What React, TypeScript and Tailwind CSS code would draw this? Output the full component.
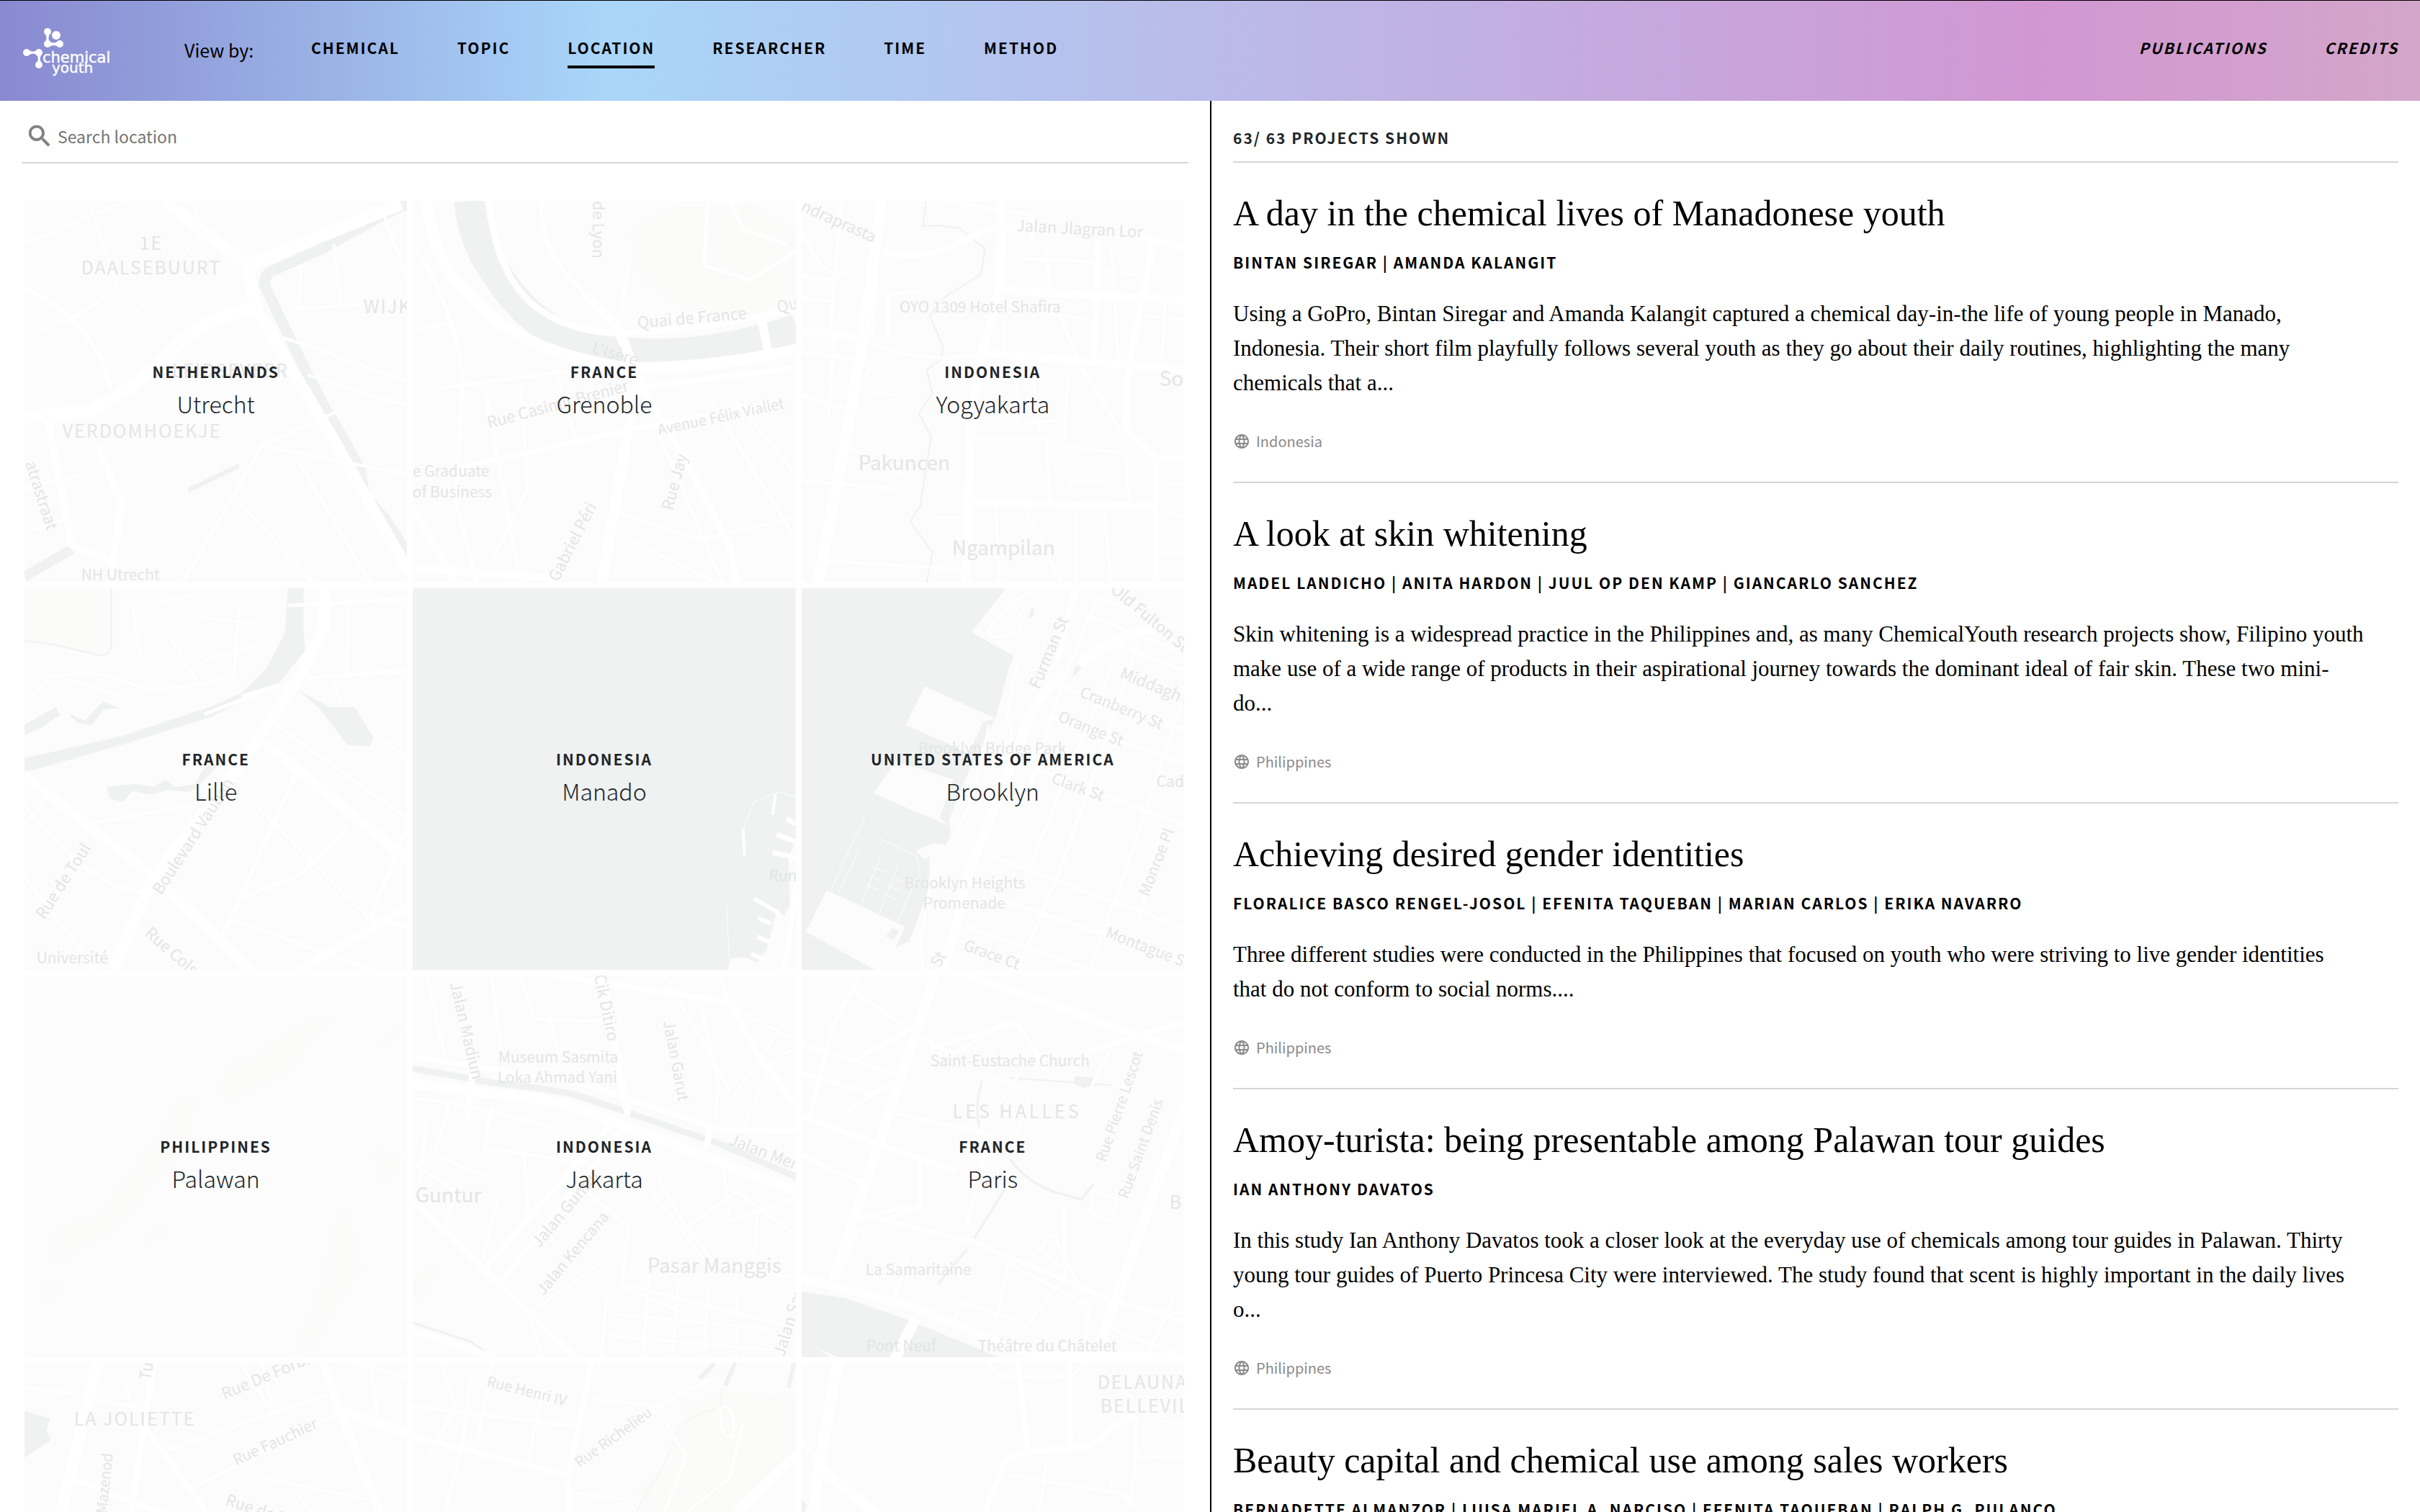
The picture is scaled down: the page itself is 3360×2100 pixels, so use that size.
import { useState } from "react";

type Label = { t: string; x: number; y: number; r?: number; size?: number; ls?: number };
type Place = {
  country: string;
  city: string;
  base?: string;
  hills?: string[];
  land?: string[];
  water?: string[];
  streams?: [string, number][];
  roads: [string, number][];
  labels: Label[];
};
type Project = { title: string; people: string[]; lines: string; country: string };

const NAV = ["Chemical", "Topic", "Location", "Researcher", "Time", "Method"];

// Map drawings use a 532 x 530 canvas, the same as one tile
const PLACES: Place[] = [
  {
    country: "Netherlands",
    city: "Utrecht",
    streams: [
      ["M532 4 L494 22 L416 65 L345 97 Q332 103 334 118 L366 185 L394 242 L419 290 L437 320 L466 372 L473 410 L501 442 L534 492", 15],
      ["M0 522 L66 484", 14],
      ["M228 402 L298 368", 6],
      ["M151 260 L196 218", 12],
    ],
    roads: [
      ["M194 0 L309 88 L323 152 L423 320 L494 445 L534 515", 16],
      ["M305 92 L523 4", 18],
      ["M316 149 Q240 165 201 214 L151 256 L94 292 L0 300", 18],
      ["M30 290 L66 478 L119 500", 10],
      ["M101 338 L135 420 L119 530", 10],
      ["M0 120 Q100 170 120 260", 6],
      ["M360 190 L532 250 M394 242 L532 285 M330 340 L440 290 M220 530 L330 340 L532 380", 4],
      ["M385 90 L380 150 L532 140 M430 60 L440 150 M500 20 L532 110", 4],
      ["M90 0 L130 120 L60 170 M0 60 L140 0 M150 160 L250 40 L230 0 M0 190 L90 150", 3],
      ["M380 360 L480 530 M300 420 L400 530 M0 400 L80 380 M0 460 L66 440", 4],
    ],
    labels: [
      { t: "1E", x: 160, y: 68, size: 25, ls: 2 },
      { t: "DAALSEBUURT", x: 79, y: 102, size: 25, ls: 2 },
      { t: "WIJK", x: 471, y: 156, size: 25, ls: 2 },
      { t: "LEIDSEVEER", x: 205, y: 245, size: 25, ls: 2 },
      { t: "VERDOMHOEKJE", x: 53, y: 329, size: 25, ls: 2 },
      { t: "atrastraat", x: 1, y: 364, r: 72 },
      { t: "NH Utrecht", x: 79, y: 527, size: 21 },
    ],
  },
  {
    country: "France",
    city: "Grenoble",
    hills: ["M300 45 L350 10 L470 5 L532 40 L532 130 L470 160 L380 150 L320 110 Z"],
    streams: [["M79 0 Q84 60 120 106 Q180 200 290 210 Q400 222 534 178", 42]],
    roads: [
      ["M20 0 Q30 90 77 128 Q150 215 306 232 Q420 232 534 206", 16],
      ["M108 0 Q110 70 145 120 Q190 180 284 184 Q400 180 532 150", 9],
      ["M240 130 L284 174 L315 250 L299 320 L263 530", 14],
      ["M315 250 L377 356 L441 481 L450 530", 9],
      ["M484 160 L496 222", 12],
      ["M70 370 L290 320 L500 280 M306 260 L532 232", 7],
      ["M0 510 L199 524 M0 425 L60 530", 10],
      ["M0 60 Q60 150 70 250 L60 420 L90 530 M0 180 L50 170 M40 260 L260 230 M100 260 L150 530", 5],
      ["M150 250 L160 400 L110 500 M200 240 L230 340 M280 430 L400 470 L532 440 M410 270 L532 470 M450 280 L532 380 M300 470 L420 530 M340 320 L430 530", 4],
      ["M410 0 L405 90 L470 110 L532 70 M440 0 L460 40 L520 60 M180 0 Q170 60 240 130 M300 90 L290 150", 5],
    ],
    labels: [
      { t: "de Lyon", x: 250, y: 0, r: 90 },
      { t: "Quai de France", x: 313, y: 177, r: -5 },
      { t: "Qu", x: 508, y: 156, r: -14 },
      { t: "L'Isère", x: 248, y: 211, r: 16 },
      { t: "Rue Casimir Brenier", x: 106, y: 316, r: -15 },
      { t: "Avenue Félix Viallet", x: 342, y: 325, r: -12, size: 20 },
      { t: "e Graduate", x: 0, y: 383, size: 21 },
      { t: "of Business", x: 0, y: 412, size: 21 },
      { t: "Rue Jay", x: 361, y: 431, r: -75 },
      { t: "Gabriel Péri", x: 202, y: 530, r: -63 },
    ],
  },
  {
    country: "Indonesia",
    city: "Yogyakarta",
    streams: [
      ["M173 0 L169 35 L190 34 L220 38 L255 67 L249 102 L197 135 L178 160 L197 202 L194 220 L174 235 L182 267 L163 295 L180 327 L165 424 L151 445 L182 488 L174 530", 2],
    ],
    roads: [
      ["M111 0 L85 195 L60 338 L23 530", 15],
      ["M278 0 L276 117 L251 210 L236 302 L228 530", 12],
      ["M113 70 Q180 84 225 55 L263 38 L310 38", 9],
      ["M465 49 L534 65 M0 180 L85 190", 10],
      ["M278 124 L532 138 M247 210 L532 235", 11],
      ["M412 52 L406 220", 8],
      ["M488 60 L454 231 L450 317 L492 356 L492 530", 9],
      ["M232 419 L492 424 M490 358 L532 358", 9],
      ["M358 156 L385 224 L442 317", 5],
      ["M0 388 L130 400 M35 500 L228 512 M60 340 L150 385 M96 230 L85 250 M111 10 L98 190", 4],
      ["M0 105 L50 110 M0 135 L45 140 M55 0 L40 180 M0 40 Q30 110 60 100 M0 210 L74 220 M45 190 L38 300 M0 270 L70 290", 4],
      ["M90 195 Q170 230 250 212 M90 265 L130 270 M120 190 L120 130 L170 125 M200 0 L320 20 L320 60 M310 80 L410 85 M340 60 L345 130", 4],
      ["M280 160 L280 210 M300 150 L400 165 M430 60 L440 220 M415 95 L480 105 M480 160 L532 165 M505 140 L500 225", 3],
      ["M240 330 L340 330 L345 420 M270 420 L275 530 M310 425 L360 530 M360 340 L450 350 L455 420 M370 390 L420 390 M380 425 L380 530 M420 425 L430 530", 3],
      ["M500 390 L532 395 M500 430 L532 440 M500 490 L532 490 M320 230 L330 320 M370 240 L365 330 M300 215 L300 310 L360 305 M180 440 L235 440", 3],
    ],
    labels: [
      { t: "ndraprasta", x: -2, y: 13, r: 24 },
      { t: "Jalan Jlagran Lor", x: 298, y: 42, r: 3 },
      { t: "OYO 1309 Hotel Shafira", x: 136, y: 155, size: 21 },
      { t: "So", x: 497, y: 257, size: 28 },
      { t: "Pakuncen", x: 79, y: 374, size: 28 },
      { t: "Ngampilan", x: 209, y: 492, size: 28 },
    ],
  },
  {
    country: "France",
    city: "Lille",
    hills: ["M0 0 H121 V80 Q120 95 105 90 L0 72 Z"],
    water: [
      "M366 0 H388 L388 60 L390 86 L352 134 L308 153 L302 145 L336 112 L362 62 Z",
      "M302 145 L258 165 L137 205 L0 236 V254 L14 252 L140 216 L262 178 L306 154 Z",
      "M381 142 L423 165 L459 165 L485 208 L479 220 L448 217 L412 169 Z",
      "M114 276 L155 272 L180 276 L196 266 L210 276 L237 272 L251 247 L269 245 L248 269 L230 283 L200 280 L176 287 L150 282 L137 297 L119 292 Z",
      "M0 190 L44 165 L50 176 L23 194 L0 204 Z",
      "M62 174 L84 184 L109 158 L134 167 L110 168 L94 190 L73 187 Z",
    ],
    streams: [["M0 73 L40 78 L105 93 Q120 93 121 80 V0", 2]],
    roads: [
      ["M418 0 L416 54 L387 115 L351 169 L309 233 L270 285 L180 400 L123 530", 16],
      ["M334 215 L534 378", 14],
      ["M0 261 L180 400 L316 532", 13],
      ["M534 442 L380 532", 12],
      ["M531 15 L366 24 M532 115 L394 124 M302 150 L356 134 M250 175 L340 140", 5],
      ["M380 251 L300 430 L270 490 M450 330 L380 400 L300 430 M290 460 L480 530 M320 300 L480 460 L532 470 M480 460 L532 330", 5],
      ["M450 20 L448 120 M430 130 L440 165 M500 210 L532 240 L532 300 M350 190 L532 320", 4],
      ["M0 300 Q50 370 120 410 L180 430 M100 325 L240 300 M0 400 L100 530 M0 330 L30 290", 4],
      ["M60 120 Q100 110 170 142 L270 130 M10 150 L40 120 L130 150 M150 20 L160 90 L210 140 L280 125 M170 60 Q180 30 210 80 L240 130", 3],
      ["M240 40 L330 50 M230 10 L190 20 M300 20 L290 130 M250 100 L320 80", 3],
    ],
    labels: [
      { t: "Boulevard Vauban", x: 190, y: 427, r: -57 },
      { t: "Rue de Toul", x: 28, y: 461, r: -57 },
      { t: "Rue Colson", x: 166, y: 481, r: 41 },
      { t: "Université", x: 17, y: 521, size: 21 },
    ],
  },
  {
    country: "Indonesia",
    city: "Manado",
    base: "#eff2f1",
    land: [
      "M532 350 L522 375 L524 440 L516 455 L506 447 L492 500 L480 520 L460 512 L441 515 L438 530 H532 Z",
    ],
    streams: [],
    roads: [
      ["M534 400 L524 480 L516 530", 6],
      ["M504 286 L500 315 M459 335 L461 372", 4],
      ["M506 342 L532 352 M500 367 L532 374 M520 320 L532 328", 7],
      ["M474 431 L509 451 M480 458 L498 466 M478 484 L498 492 M470 508 L490 516", 6],
      ["M436 442 L440 515 M459 335 L474 297 L509 283 L532 290", 1],
    ],
    labels: [{ t: "Run", x: 495, y: 407, size: 21 }],
  },
  {
    country: "United States of America",
    city: "Brooklyn",
    base: "#eff2f1",
    land: [
      "M284 0 L236 61 L295 94 L287 115 L270 179 L224 272 L205 322 L207 344 L201 356 L182 354 L178 379 L176 420 L150 490 L117 505 L102 530 H532 V0 Z",
      "M171 136 L270 181 L253 185 L232 229 L145 190 Z",
      "M132 240 L211 266 L192 319 L205 330 L100 285 Z",
      "M35 419 L144 470 L130 500 L102 530 L6 477 Z",
      "M159 365 L182 354 L190 370 L170 376 Z",
    ],
    roads: [
      ["M507 51 Q440 65 385 104", 14],
      ["M366 119 Q318 155 305 211 L274 290 L232 394 L213 476 L194 532", 13],
      ["M381 0 L355 100", 9],
      ["M412 11 L362 133 L316 280", 4],
      ["M393 36 L532 90 M430 75 L532 115 M362 136 L532 197 M343 178 L532 244 M324 251 L532 329 M263 372 L532 472 M266 429 L532 519 M230 470 L400 530", 5],
      ["M469 72 L360 390 L300 530 M527 161 L440 420 L400 530 M430 110 L316 390 M500 330 L470 460 M284 250 L255 340", 4],
      ["M412 11 L532 60 M300 20 Q240 60 270 68 Q330 60 290 20 L330 0 M300 100 L285 180 Q300 210 280 230 M260 190 Q240 300 210 350 Q180 380 175 440 Q160 500 170 530", 3],
      ["M89 315 L41 418 M107 347 L161 373 L165 400 M80 365 L52 422 M110 372 L84 437 M134 386 L108 452 M160 402 L134 464", 1],
      ["M100 388 L116 394 M95 400 L111 406 M90 412 L106 418 M124 400 L142 408 M119 412 L137 420 M114 424 L132 432", 1],
    ],
    water: ["M126 472 L136 476 L128 488 L117 484 Z", "M318 30 L324 28 L322 38 L316 42 Z", "M380 108 L390 110 L376 124 Z"],
    labels: [
      { t: "Furman St", x: 330, y: 141, r: -67 },
      { t: "Old Fulton St", x: 428, y: 4, r: 40 },
      { t: "Middagh St", x: 441, y: 124, r: 22 },
      { t: "Cranberry St", x: 385, y: 150, r: 22, size: 21 },
      { t: "Orange St", x: 355, y: 184, r: 22, size: 21 },
      { t: "Brooklyn Bridge Park", x: 162, y: 230, size: 21 },
      { t: "Clark St", x: 346, y: 270, r: 20, size: 21 },
      { t: "Cad", x: 493, y: 276, size: 21 },
      { t: "Monroe Pl", x: 482, y: 429, r: -69, size: 21 },
      { t: "Brooklyn Heights", x: 143, y: 417, size: 21 },
      { t: "Promenade", x: 169, y: 445, size: 21 },
      { t: "Grace Ct", x: 224, y: 502, r: 20, size: 21 },
      { t: "Montague St", x: 421, y: 484, r: 21, size: 21 },
      { t: "St", x: 192, y: 528, r: -62 },
    ],
  },
  {
    country: "Philippines",
    city: "Palawan",
    hills: [
      "M430 50 L366 132 L285 178 L273 156 L280 127 L330 105 L380 70 Z",
      "M237 166 L230 230 L180 287 L130 350 L37 403 L44 355 L109 326 L144 277 L190 220 L205 180 Z",
      "M441 316 L469 403 L430 460 L394 530 H372 L410 440 Z",
      "M532 70 L490 110 L510 80 Z M480 240 L525 250 L500 290 Z M200 355 L165 380 L180 350 Z M30 430 L50 430 L30 460 Z",
    ],
    roads: [],
    labels: [],
  },
  {
    country: "Indonesia",
    city: "Jakarta",
    hills: ["M40 400 L10 450 L0 440 V420 Z"],
    streams: [
      ["M0 129 L113 149 Q200 158 234 168 L427 234 L534 280", 9],
      ["M0 482 L80 508 L110 528", 3],
    ],
    roads: [
      ["M0 113 L127 132 L249 154 L427 214 L534 216", 7],
      ["M0 150 L120 165 Q200 172 240 188 L534 300", 14],
      ["M199 0 L441 37 L480 110 L532 180", 9],
      ["M277 205 L99 408 M290 215 L120 428", 7],
      ["M0 311 L227 532 M0 493 L113 530", 9],
      ["M263 0 L299 195 M84 130 L76 200 M414 210 L408 240", 9],
      ["M441 37 L425 0 M350 0 L441 160 M400 40 L425 150 L420 200 M190 50 L200 100 L270 110 M110 0 L125 120 M150 0 L170 60 L290 65 M20 0 L45 110", 4],
      ["M0 170 L76 180 L190 210 M20 200 L10 290 M50 180 L30 250 L110 280 M110 180 L100 240 L240 260 M0 260 L60 300 L40 360 M155 240 L160 330", 4],
      ["M230 290 L300 350 L290 430 L380 470 M340 280 L380 350 L450 300 L532 360 M380 350 L420 400 L532 420 M300 430 L532 490 M270 440 L262 530 M330 400 L320 530", 4],
      ["M370 420 L360 530 M410 430 L405 530 M450 440 L450 530 M270 500 L500 520 M275 470 L490 490 M300 260 L410 400 M430 250 L440 340 L532 310 M480 320 L470 430", 3],
      ["M445 150 L532 100 M430 190 L520 60 M460 210 L500 120 M180 530 L160 470 L260 400 M120 305 L90 420 M400 20 L532 90", 3],
    ],
    labels: [
      { t: "Jalan Madiun", x: 52, y: 11, r: 77 },
      { t: "Cik Ditiro", x: 252, y: 0, r: 78 },
      { t: "Jalan Garut", x: 348, y: 64, r: 79, size: 21 },
      { t: "Museum Sasmita", x: 119, y: 121, size: 21 },
      { t: "Loka Ahmad Yani", x: 118, y: 149, size: 21 },
      { t: "Jalan Ment", x: 438, y: 234, r: 21 },
      { t: "Guntur", x: 4, y: 315, size: 28 },
      { t: "Jalan Guntur", x: 176, y: 379, r: -50 },
      { t: "Jalan Kencana", x: 182, y: 445, r: -50, size: 21 },
      { t: "Pasar Manggis", x: 326, y: 413, size: 28 },
      { t: "Jalan Sawo", x: 516, y: 530, r: -73 },
    ],
  },
  {
    country: "France",
    city: "Paris",
    water: ["M0 439 L60 448 L148 478 L274 530 H50 L18 515 L40 530 H0 Z", "M380 140 L410 142 L408 154 L392 156 L378 150 Z"],
    streams: [
      ["M251 146 Q240 180 247 210", 3],
      ["M290 255 Q310 285 350 300 L389 311 L405 290", 3],
      ["M282 297 L240 365 M230 380 L190 428", 3],
      ["M290 142 L430 152", 2],
    ],
    roads: [
      ["M186 0 L44 423", 13],
      ["M232 0 L469 83 L532 103", 11],
      ["M532 64 L469 83 L400 105", 8],
      ["M534 178 L488 306 L416 508", 14],
      ["M0 195 L106 234 L217 272", 8],
      ["M0 420 L152 459 L312 524 L532 530", 11],
      ["M159 476 L130 532", 15],
      ["M80 0 L40 80 L12 195 M70 20 L150 75 L70 120 M150 75 L210 110 L290 60 M180 100 L300 65 L340 130 M0 95 L140 140 L60 190 M0 135 L100 165", 5],
      ["M125 190 L260 220 L230 350 M165 250 L165 320 L110 342 M80 330 L240 370 L430 450 L532 480 M0 250 L90 290 M70 340 L150 320 M150 385 L125 460", 5],
      ["M290 390 L270 480 M290 400 L400 460 L390 530 M350 360 L400 460 M345 360 L315 400 M365 320 L365 420 L310 490 M330 380 L360 405 M210 480 L225 455 L300 480", 4],
      ["M440 455 L532 470 M430 490 L532 530 M520 440 L480 530 M400 160 L430 100 M405 300 L440 310 L430 340 L400 330 Z", 4],
      ["M260 140 L320 160 M300 140 L255 210 M320 160 L290 250 M60 400 L80 350 L95 380", 3],
    ],
    labels: [
      { t: "Saint-Eustache Church", x: 179, y: 126, size: 21 },
      { t: "LES HALLES", x: 210, y: 198, size: 25, ls: 4 },
      { t: "Rue Pierre Lescot", x: 422, y: 260, r: -71, size: 20 },
      { t: "Rue Saint Denis", x: 453, y: 311, r: -70, size: 20 },
      { t: "BE", x: 511, y: 324, size: 25, ls: 2 },
      { t: "La Samaritaine", x: 89, y: 416, size: 21 },
      { t: "Pont Neuf", x: 90, y: 522, size: 21 },
      { t: "Théâtre du Châtelet", x: 245, y: 522, size: 21 },
    ],
  },
  {
    country: "France",
    city: "Marseille",
    water: ["M0 67 L36 77 L31 93 L37 107 L0 132 Z"],
    roads: [
      ["M101 0 L51 208 L0 420", 16],
      ["M180 0 L144 230", 9],
      ["M416 0 L437 64 L494 208 L540 320", 12],
      ["M437 64 L534 99", 14],
      ["M166 88 L244 194 L300 300 M66 160 L180 205 L300 240", 8],
      ["M95 50 L170 65 M200 120 L420 45 M300 0 L350 75 M240 170 L437 70 M0 35 L65 42 M330 0 L345 60 M480 0 L490 70 M532 20 L460 0", 4],
      ["M280 208 L330 160 L480 190 M350 150 L400 208 M140 30 L150 60", 3],
    ],
    labels: [
      { t: "Tu", x: 175, y: 25, r: -80 },
      { t: "Rue De Forbin", x: 278, y: 51, r: -23 },
      { t: "LA JOLIETTE", x: 69, y: 87, size: 25, ls: 2 },
      { t: "Rue Fauchier", x: 294, y: 143, r: -25, size: 21 },
      { t: "Mazenod", x: 114, y: 210, r: -84, size: 20 },
      { t: "Rue de la", x: 278, y: 197, r: 18 },
    ],
  },
  {
    country: "France",
    city: "Saint-Étienne",
    hills: ["M380 60 L430 40 L532 45 V130 L449 208 H340 L310 180 L360 130 Z"],
    streams: [["M399 22 L420 0 M434 32 L448 0 M522 34 L530 0", 6], ["M430 35 L428 60 L390 75 L370 90 L350 140 L310 208", 1]],
    roads: [
      ["M0 102 L216 156 L218 208 M249 0 L216 156", 8],
      ["M534 127 L449 208", 14],
      ["M40 0 L60 60 L20 130 M80 20 L70 110 L45 208 M110 0 L90 110 M180 40 L160 140 M0 60 L240 90 M250 50 L340 60 L420 20", 4],
      ["M216 156 L360 50 M216 180 L300 190 L310 208 M350 80 L380 130 L350 208 M430 60 Q450 60 445 100 Q425 110 428 60 M460 80 L440 160 L380 208", 3],
    ],
    labels: [
      { t: "Rue Henri IV", x: 102, y: 32, r: 14, size: 20 },
      { t: "Rue Richelieu", x: 232, y: 146, r: -36, size: 20 },
    ],
  },
  {
    country: "France",
    city: "Belleville",
    water: ["M0 188 L8 198 L4 210 L0 212 Z"],
    roads: [
      ["M50 0 L25 141 L14 230 M25 145 L110 215", 15],
      ["M465 73 L431 88 Q410 114 389 117 L312 124 Q280 130 278 151 L251 215", 9],
      ["M301 0 L314 122 M372 0 L374 115", 7],
      ["M0 110 L30 140 M262 0 Q265 20 300 20 L374 18 L395 0 M289 156 L440 180 L470 200 M465 73 L465 130 L455 200 M465 130 L532 132", 4],
      ["M475 90 L475 110 M500 80 L532 85 M430 160 L430 175 M340 140 L330 208", 3],
    ],
    labels: [
      { t: "DELAUNA", x: 411, y: 36, size: 25, ls: 2 },
      { t: "BELLEVIL", x: 415, y: 69, size: 25, ls: 2 },
    ],
  },
];

const PROJECTS: Project[] = [
  {
    title: "A day in the chemical lives of Manadonese youth",
    people: ["Bintan Siregar", "Amanda Kalangit"],
    lines:
      "Using a GoPro, Bintan Siregar and Amanda Kalangit captured a chemical day-in-the life of young people in Manado, Indonesia. Their short film playfully follows several youth as they go about their daily routines, highlighting the many chemicals that a...",
    country: "Indonesia",
  },
  {
    title: "A look at skin whitening",
    people: ["Madel Landicho", "Anita Hardon", "Juul op den Kamp", "Giancarlo Sanchez"],
    lines:
      "Skin whitening is a widespread practice in the Philippines and, as many ChemicalYouth research projects show, Filipino youth make use of a wide range of products in their aspirational journey towards the dominant ideal of fair skin. These two mini-do...",
    country: "Philippines",
  },
  {
    title: "Achieving desired gender identities",
    people: ["Floralice Basco Rengel-Josol", "Efenita Taqueban", "Marian Carlos", "Erika Navarro"],
    lines:
      "Three different studies were conducted in the Philippines that focused on youth who were striving to live gender identities that\u00a0do not conform to social norms....",
    country: "Philippines",
  },
  {
    title: "Amoy-turista: being presentable among Palawan tour guides",
    people: ["Ian Anthony Davatos"],
    lines:
      "In this study Ian Anthony Davatos took a closer look at the everyday use of chemicals among tour guides in Palawan. Thirty young tour guides of Puerto Princesa City were interviewed. The study found that scent is highly important in the daily lives o...",
    country: "Philippines",
  },
  {
    title: "Beauty capital and chemical use among sales workers",
    people: ["Bernadette Almanzor", "Luisa Mariel A. Narciso", "Efenita Taqueban", "Ralph G. Pulanco"],
    lines: "",
    country: "Philippines",
  },
];

const Logo = () => (
  <svg viewBox="0 0 124 70" className="h-[70px] w-[124px]" fill="#fff" role="img" aria-label="Chemical Youth">
    <circle cx="36" cy="8" r="5" />
    <circle cx="48" cy="13" r="6" />
    <circle cx="36" cy="25" r="5" />
    <circle cx="53" cy="25" r="5" />
    <path d="M33 11 Q36 17 33 22 H39 Q36 17 39 11 Z" />
    <path d="M38 21 Q45 26 51 21 V29 Q45 25 38 29 Z" />
    <circle cx="7" cy="37" r="5" />
    <circle cx="24" cy="37" r="5" />
    <circle cx="24" cy="54" r="5" />
    <path d="M9 33 Q16 38 22 33 V41 Q16 36 9 41 Z" />
    <path d="M21 40 Q24 45 22 51 H27 Q24 45 28 39 Z" />
    <g fontFamily="'DejaVu Sans', sans-serif" stroke="#fff" strokeWidth="0.4">
      <text x="29" y="51" fontSize="21">chemical</text>
      <text x="42" y="65" fontSize="20">youth</text>
    </g>
  </svg>
);

const SearchIcon = () => (
  <svg viewBox="3 3 18 18" className="size-[30px] shrink-0" fill="#808080" stroke="#808080" strokeWidth="0.4" aria-hidden="true">
    <path d="M15.5 14h-.79l-.28-.27A6.47 6.47 0 0 0 16 9.5 6.5 6.5 0 1 0 9.5 16c1.61 0 3.09-.59 4.23-1.57l.27.28v.79l5 4.99L20.49 19l-4.99-5zm-6 0C7.01 14 5 11.99 5 9.5S7.01 5 9.5 5 14 7.01 14 9.5 11.99 14 9.5 14z" />
  </svg>
);

const GlobeIcon = () => (
  <svg viewBox="0 0 24 24" className="size-6" fill="#8a8a8a" aria-hidden="true">
    <path d="M11.99 2C6.47 2 2 6.48 2 12s4.47 10 9.99 10C17.52 22 22 17.52 22 12S17.52 2 11.99 2zm6.93 6h-2.95a15.65 15.65 0 0 0-1.38-3.56A8.03 8.03 0 0 1 18.92 8zM12 4.04c.83 1.2 1.48 2.53 1.91 3.96h-3.82c.43-1.43 1.08-2.76 1.91-3.96zM4.26 14C4.1 13.36 4 12.69 4 12s.1-1.36.26-2h3.38c-.08.66-.14 1.32-.14 2s.06 1.34.14 2H4.26zm.82 2h2.95c.32 1.25.78 2.45 1.38 3.56A7.99 7.99 0 0 1 5.08 16zm2.95-8H5.08a7.99 7.99 0 0 1 4.33-3.56A15.65 15.65 0 0 0 8.03 8zM12 19.96c-.83-1.2-1.48-2.53-1.91-3.96h3.82c-.43 1.43-1.08 2.76-1.91 3.96zM14.34 14H9.66c-.09-.66-.16-1.32-.16-2s.07-1.35.16-2h4.68c.09.65.16 1.32.16 2s-.07 1.34-.16 2zm.25 5.56c.6-1.11 1.06-2.31 1.38-3.56h2.95a8.03 8.03 0 0 1-4.33 3.56zM16.36 14c.08-.66.14-1.32.14-2s-.06-1.34-.14-2h3.38c.16.64.26 1.31.26 2s-.1 1.36-.26 2h-3.38z" />
  </svg>
);

const MapArt = ({ place }: { place: Place }) => (
  <svg
    viewBox="0 0 532 530"
    preserveAspectRatio="xMidYMid slice"
    className="col-start-1 row-start-1 size-full"
    fill="none"
    aria-hidden="true"
  >
    <rect width="532" height="530" fill={place.base ?? "#fcfcfc"} />
    {place.land?.map((d) => <path key={d} d={d} fill="#fbfcfb" />)}
    {place.hills?.map((d) => <path key={d} d={d} fill="#fbfbfa" />)}
    {place.water?.map((d) => <path key={d} d={d} fill="#eff2f1" />)}
    {place.streams?.map(([d, w]) => <path key={d} d={d} stroke="#eff2f1" strokeWidth={w} />)}
    {place.roads.map(([d, w]) => (
      <path key={d} d={d} stroke="#fff" strokeWidth={w} strokeLinejoin="round" />
    ))}
    {place.labels.map((l) => (
      <text
        key={l.t}
        fill="#e5e5e5"
        fontSize={l.size ?? 22}
        letterSpacing={l.ls ?? 0}
        transform={`translate(${l.x} ${l.y}) rotate(${l.r ?? 0})`}
      >
        {l.t}
      </text>
    ))}
  </svg>
);

const PlaceTile = ({ place }: { place: Place }) => (
  <button type="button" className="grid h-[530px] cursor-pointer overflow-hidden text-[#212529]">
    <MapArt place={place} />
    <span className="relative col-start-1 row-start-1 flex flex-col items-center self-center pb-2">
      <span className="text-[21px] leading-[40px] font-bold tracking-[2px] uppercase">{place.country}</span>
      <span className="text-[32px] leading-[48px] font-extralight">{place.city}</span>
    </span>
  </button>
);

const ProjectCard = ({ project }: { project: Project }) => (
  <article className="border-b-2 border-[#d6d6d6] py-10">
    <h2 className="font-['Liberation_Serif',serif] text-[50px] leading-[60px]">
      <a href="#project">{project.title}</a>
    </h2>
    <p className="mt-5 text-[21px] leading-[36px] font-bold tracking-[2px] uppercase">{project.people.join(" | ")}</p>
    <p className="mt-[30px] pr-11 font-['Liberation_Serif',serif] text-[31px] leading-[48px]">{project.lines}</p>
    <p className="mt-[41px] flex items-center gap-2 text-[20px] leading-8 text-[#8a8a8a]">
      <GlobeIcon />
      {project.country}
    </p>
  </article>
);

const App = () => {
  const [view, setView] = useState("Location");
  const [query, setQuery] = useState("");

  const places = PLACES.filter((p) => `${p.country} ${p.city}`.toLowerCase().includes(query.toLowerCase()));

  return (
    <div className="flex h-screen flex-col overflow-hidden bg-white font-['Noto_Sans_CJK_JP','Noto_Sans',sans-serif] text-black">
      <header className="flex h-[140px] shrink-0 items-center border-t border-black bg-[linear-gradient(90deg,#8989d0_0%,#a9d6f9_25%,#d197d3_84%,#d4a6ca_100%)] px-[30px]">
        <a href="#home" className="w-[226px]">
          <Logo />
        </a>
        <span className="w-[176px] pb-1 text-[25px] leading-[40px]">View by:</span>
        <nav className="flex flex-1 items-center gap-20">
          {NAV.map((item) => (
            <button
              key={item}
              type="button"
              onClick={() => setView(item)}
              className={`cursor-pointer border-b-4 pb-[6px] text-[21px] leading-[38px] font-bold tracking-[2px] uppercase ${
                view === item ? "border-black" : "border-transparent"
              }`}
            >
              {item}
            </button>
          ))}
        </nav>
        <nav className="flex items-center gap-20 text-[21px] leading-[38px] font-bold tracking-[2px] uppercase italic">
          <a href="#publications" className="border-b-4 border-transparent pb-[6px]">Publications</a>
          <a href="#credits" className="border-b-4 border-transparent pb-[6px]">Credits</a>
        </nav>
      </header>

      <main className="grid min-h-0 flex-1 grid-cols-2">
        <section className="overflow-y-auto [scrollbar-width:none]">
          <label className="mx-[30px] flex h-[87px] items-center gap-[10px] border-b-2 border-[#d5d7d6] pt-3 pl-[10px]">
            <SearchIcon />
            <input
              type="text"
              aria-label="Search location"
              placeholder="Search location"
              value={query}
              onChange={(e) => setQuery(e.target.value)}
              className="w-full text-[23px] leading-[40px] outline-none placeholder:text-[#757575]"
            />
          </label>
          <div className="mt-[52px] grid grid-cols-3 gap-2 pr-9 pl-[34px]">
            {places.map((p) => (
              <PlaceTile key={`${p.country}-${p.city}`} place={p} />
            ))}
          </div>
        </section>

        <section className="overflow-y-auto border-l-2 border-black pr-[30px] pl-[30px] [scrollbar-width:none]">
          <p className="flex h-[86px] items-center border-b-2 border-[#d6d6d6] pt-5 text-[21px] font-bold tracking-[2px] text-[#212529] uppercase">
            63/ 63 Projects shown
          </p>
          {PROJECTS.map((p) => (
            <ProjectCard key={p.title} project={p} />
          ))}
        </section>
      </main>
    </div>
  );
};

export default App;
